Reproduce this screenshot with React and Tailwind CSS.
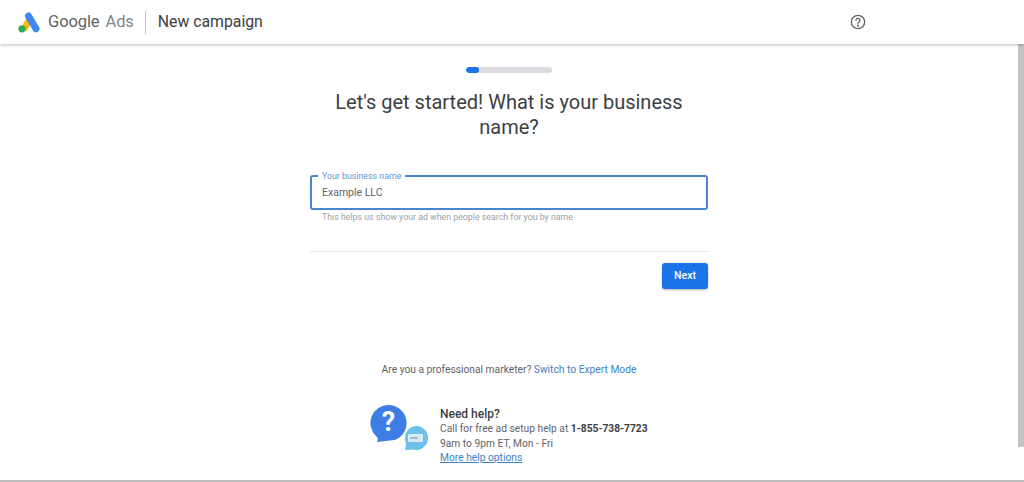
export default function App() {
  return (
    <div className="flex h-[482px] w-[1024px] flex-col overflow-hidden bg-white font-['Roboto',sans-serif] text-[#3c4043]">
      <header className="relative z-10 flex h-[44px] shrink-0 items-center bg-white pl-[17px] shadow-[0_1px_3px_rgba(60,64,67,0.35)]">
        <svg width="23" height="21" viewBox="0 0 23 21" className="shrink-0">
          <path d="M8 15.5 L12.5 7" stroke="#fbbc04" strokeWidth="6.6" strokeLinecap="round" />
          <path d="M11.5 4 L19 16.8" stroke="#4285f4" strokeWidth="7" strokeLinecap="round" />
          <circle cx="5" cy="16.8" r="3.6" fill="#34a853" />
        </svg>
        <span className="ml-[8px] text-[16.5px] tracking-[-0.1px] text-[#5f6368]">Google</span>
        <span className="ml-[6px] text-[16.5px] tracking-[-0.1px] text-[#80868b]">Ads</span>
        <div className="ml-[11px] mr-[12px] h-[23px] w-px bg-[#bdc1c6]" />
        <span className="text-[15.8px] text-[#3c4043]">New campaign</span>
        <div className="ml-[587px] flex items-center">
          <svg width="16" height="16" viewBox="0 0 24 24" fill="none" stroke="#5f6368" strokeWidth="2">
            <circle cx="12" cy="12" r="10" />
            <path d="M9 9.5a3 3 0 0 1 6 0c0 2-3 2.3-3 4.5" strokeLinecap="round" />
            <circle cx="12" cy="17.5" r="0.6" fill="#5f6368" />
          </svg>
        </div>
      </header>

      <div className="flex min-h-0 flex-1">
        <main className="flex min-w-0 flex-1 flex-col items-center pt-[23px]">
          <div className="h-[6px] w-[86px] overflow-hidden rounded-full bg-[#dadce0]">
            <div className="h-full w-[13px] rounded-full bg-[#1a73e8]" />
          </div>

          <h1 className="mt-[17px] w-[398px] text-center text-[20px] font-normal leading-[25px] text-[#3c4043]">
            Let's get started! What is your business name?
          </h1>

          <div className="relative mt-[35px] flex h-[35px] w-[398px] items-center rounded-[3px] border-2 border-[#4a86d0] pl-[10px] text-[10.5px] text-[#5f6368]">
            Example LLC
            <span className="absolute left-[6px] top-[-7px] bg-white px-[4px] text-[8.8px] leading-[12px] text-[#5f94d6]">
              Your business name
            </span>
          </div>
          <p className="mt-[1px] h-[12px] w-[398px] pl-[12px] text-[8.8px] leading-[12px] text-[#9aa0a6]">
            This helps us show your ad when people search for you by name
          </p>

          <div className="mt-[28px] h-px w-[398px] bg-[#e4e5e7]" />

          <div className="mt-[11px] flex w-[398px] justify-end">
            <button className="h-[26px] w-[46px] rounded-[3px] bg-[#1a73e8] text-[10.5px] font-medium text-white shadow-[0_1px_2px_rgba(60,64,67,0.4)]">
              Next
            </button>
          </div>

          <p className="mt-[74px] text-[10.25px] leading-[14px] text-[#5f6368]">
            Are you a professional marketer? <span className="text-[#3b82c4]">Switch to Expert Mode</span>
          </p>

          <div className="mt-[29px] flex w-[278px] items-start">
            <svg width="59" height="46" viewBox="0 0 59 46" className="mt-[-1px] shrink-0">
              <path d="M18.5 0a18 18 0 0 1 6 35 L7 37 Q9 33 6 31 A18 18 0 0 1 18.5 0z" fill="#3d7de4" />
              <text x="18.5" y="26" textAnchor="middle" fontSize="27" fontWeight="700" fill="#fff" fontFamily="Roboto">?</text>
              <path d="M46 21a12 12 0 1 1-3 23.6 L35 45 Q36 41 36 38 A12 12 0 0 1 46 21z" fill="#6cc0ec" />
              <rect x="38" y="29" width="15" height="8" rx="1" fill="#d8ecf7" />
              <rect x="40" y="32" width="8" height="2" fill="#9fb9cf" />
            </svg>
            <div className="ml-[11px] whitespace-nowrap text-[10.25px] leading-[14.5px] text-[#5f6368]">
              <p className="text-[12px] font-medium leading-[16px] text-[#3c4043]">Need help?</p>
              <p>
                Call for free ad setup help at <b className="font-bold text-[#3c4043]">1-855-738-7723</b>
              </p>
              <p>9am to 9pm ET, Mon - Fri</p>
              <a className="text-[#3b82c4] underline">More help options</a>
            </div>
          </div>
        </main>
        <div className="w-[6px] shrink-0 bg-white">
          <div className="h-[403px] bg-[#c4c4c4]" />
        </div>
      </div>
      <div className="h-[2px] shrink-0 bg-[#bdbdbd]" />
    </div>
  );
}
